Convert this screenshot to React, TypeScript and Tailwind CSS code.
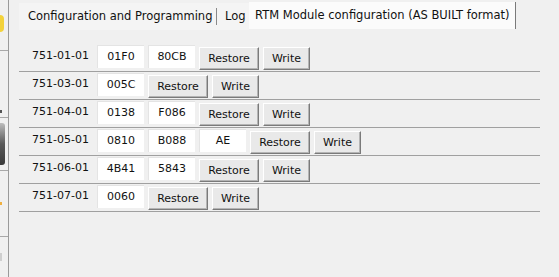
import React from "react";

type Row = { id: string; cells: string[] };

const rows: Row[] = [
  { id: "751-01-01", cells: ["01F0", "80CB"] },
  { id: "751-03-01", cells: ["005C"] },
  { id: "751-04-01", cells: ["0138", "F086"] },
  { id: "751-05-01", cells: ["0810", "B088", "AE"] },
  { id: "751-06-01", cells: ["4B41", "5843"] },
  { id: "751-07-01", cells: ["0060"] },
];

function Btn({ label, w }: { label: string; w: string }) {
  return (
    <div
      className={`${w} mt-[3px] h-[23px] flex items-center justify-center bg-[#e9e9e9] border-t border-l border-t-white border-l-white border-r border-b border-r-[#7a7a7a] border-b-[#7a7a7a] shadow-[inset_-1px_-1px_0_#b4b4b4] text-[#111]`}
    >
      <span className="pt-[1px]">{label}</span>
    </div>
  );
}

function Cell({ v }: { v: string }) {
  return (
    <div className="w-[47px] mt-[1px] h-[23px] bg-white flex items-center justify-center border-t border-l border-[#e4e4e4] text-[#111]">
      {v}
    </div>
  );
}

export default function App() {
  return (
    <div
      className="w-[559px] h-[277px] bg-[#f0f0f0] flex overflow-hidden text-[11px] text-[#111]"
      style={{ fontFamily: '"DejaVu Sans", Verdana, sans-serif' }}
    >
      {/* left toolbar remnant */}
      <div className="w-[9px] h-full border-r border-[#9a9a9a] flex flex-col shrink-0">
        <div className="h-[51px] border-b border-[#a8a8a8] flex items-start pt-[15px]">
          <div className="w-[4px] h-[17px] rounded-r-full bg-[#f3d23a]" />
        </div>
        <div className="h-[67px] border-b border-[#a8a8a8] flex items-end pb-[4px]">
          <div className="w-[2px] h-[3px] bg-[#555]" />
        </div>
        <div className="h-[53px] border-b border-[#a8a8a8] flex items-center">
          <div className="w-[5px] h-[42px] rounded-r-[3px] bg-gradient-to-b from-[#bdbdbd] via-[#5a5a5a] to-[#3a3a3a]" />
        </div>
        <div className="h-[66px] border-b border-[#a8a8a8] flex items-center">
          <div className="w-[2px] h-[3px] bg-[#f0b040]" />
        </div>
        <div className="flex-1 flex items-center">
          <div className="w-[2px] h-[8px] bg-[#cfcfcf]" />
        </div>
      </div>

      <div className="flex-1 flex flex-col pl-[10px]">
        {/* tabs */}
        <div className="h-[28px] mt-[2px] flex items-stretch text-[11.5px]">
          <div className="flex items-stretch bg-[#f4f4f4] mt-[1px]">
            <div className="w-[198px] pl-[9px] flex items-center border-r border-[#8a8a8a] my-[5px] whitespace-nowrap">
              Configuration and Programming
            </div>
            <div className="w-[32px] pl-[8px] flex items-center">Log</div>
          </div>
          <div className="w-[267px] pl-[6px] flex items-center bg-[#fbfbfb] border-r border-[#7a7a7a] mb-[1px] whitespace-nowrap">
            RTM Module configuration (AS BUILT format)
          </div>
        </div>

        {/* rows */}
        <div className="mt-[14px] w-[521px] flex flex-col">
          {rows.map((r) => (
            <div
              key={r.id}
              className="h-[28px] border-b border-[#a0a0a0] flex items-start gap-[4px]"
            >
              <div className="w-[74px] pl-[13px] mt-[1px] h-[23px] flex items-center">
                {r.id}
              </div>
              {r.cells.map((c, i) => (
                <Cell key={i} v={c} />
              ))}
              <Btn label="Restore" w="w-[60px]" />
              <Btn label="Write" w="w-[47px]" />
            </div>
          ))}
        </div>
      </div>
    </div>
  );
}
